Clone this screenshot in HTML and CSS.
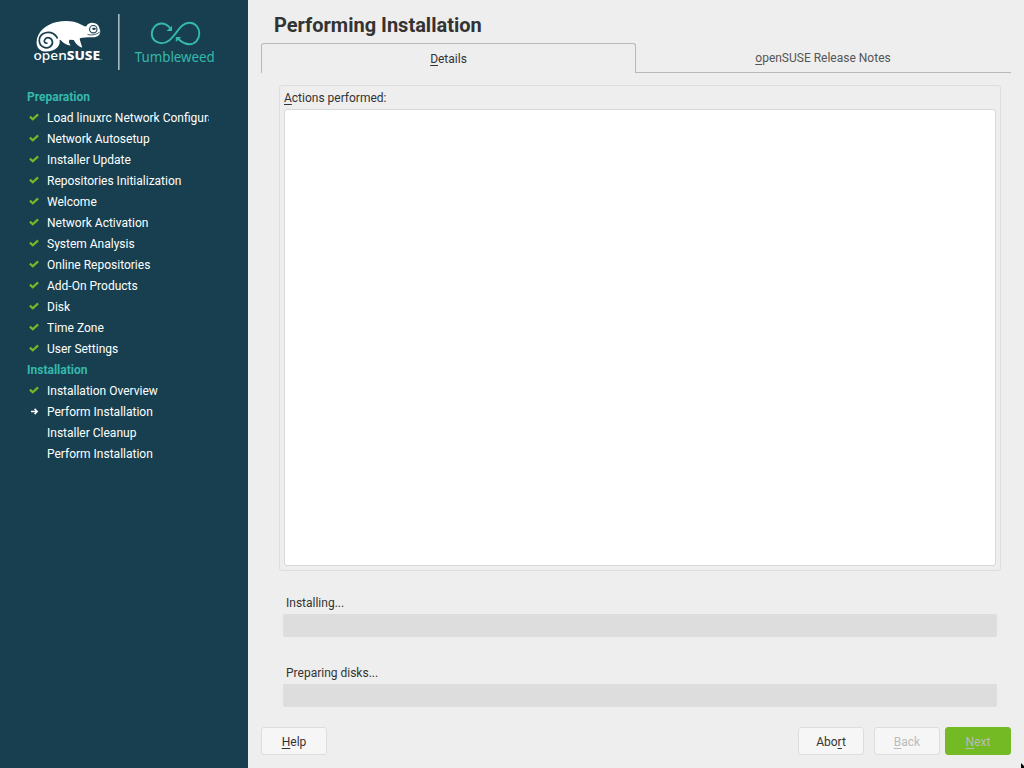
FILE: index.html
```html
<!DOCTYPE html>
<html lang="en">
<head>
<meta charset="utf-8">
<title>Performing Installation</title>
<link rel="stylesheet" href="styles.css">
</head>
<body>
<svg class="defs" width="0" height="0">
  <symbol id="check" viewBox="0 0 11 9"><path d="M.9 3.6 3.8 6.2 9.1 1.4" fill="none" stroke="#73ba25" stroke-width="2.2"/></symbol>
  <symbol id="arrow" viewBox="0 0 11 9"><path d="M2 4.5H8M5.6 1.9 8.2 4.5 5.6 7.1" fill="none" stroke="#fff" stroke-width="1.5"/></symbol>
</svg>
<div class="installer">
  <aside class="sidebar">
    <svg class="brand" width="248" height="87" viewBox="0 0 248 87">
      <path class="white" d="M46 51.6C40 51.6 36.6 48 36.6 42.3 36.6 32 46 24 57 21.9 66 20.1 75 21.2 81 24.4L85 26.6 86.3 26.2C87.3 24.1 90 22.5 93.5 22.9 97 23.3 99 25.5 99.3 28L100.3 31.2C100.2 35 97.5 37.3 93 37.2 88.5 37.2 84 37.1 79.7 38.2 79.8 40.8 81.2 43.5 82.2 47.5 78.8 47 75.3 43.3 73.8 40L69.5 39.7C68.3 41.5 69.3 43.2 70.7 45.5 66.5 45.2 63 42.8 61.2 40.5L59.5 39.8C61 46 55.2 51.6 46 51.6Z"/>
      <path class="spiral" d="M57.5 38.5C54.5 32 47.7 31 43 33.8 37.8 37.2 38.3 44.6 43.2 47 47.8 49.2 53 46.3 52.4 41.7 51.8 37.6 47 36.4 44.9 39.4 43.5 41.5 44.7 43.6 47.5 43.2"/>
      <circle class="eye" cx="93.3" cy="29.2" r="3.7"/>
      <ellipse class="pupil" cx="94" cy="28.8" rx="1.9" ry="1.1"/>
      <path class="mouth" d="M87.5 34.6C92 35.6 96.5 34.6 99.8 32"/>
      <text class="wordmark" x="33.5" y="60.3" textLength="66.5" lengthAdjust="spacingAndGlyphs">open<tspan class="strong">SUSE</tspan></text>
      <rect class="white dot" x="100.5" y="59" width="1" height="1"/>
      <rect class="divider" x="118" y="14" width="1.6" height="56"/>
      <path class="loop" d="M170 28C167.4 24.8 164.5 23.5 161.5 23.5 156 23.5 151.8 28.2 151.8 33.7S156 43.2 161.5 43.2C168 43.2 172 38 175.5 33.6 179 29 182.6 22.8 189.5 22.8 195.2 22.8 199.3 27.7 199.3 33.5S195 44.2 189.5 44.2C185 44.2 181.7 42.3 178.4 39"/>
      <path class="head" d="M172 25.8V31H166.4ZM175.8 42V36.9H181.3Z"/>
      <text class="flavor" x="134.8" y="61.5" textLength="80" lengthAdjust="spacingAndGlyphs">Tumbleweed</text>
    </svg>
    <nav class="steps">
      <h2>Preparation</h2>
      <ul>
        <li><svg><use href="#check"/></svg><span>Load linuxrc Network Configuration</span></li>
        <li><svg><use href="#check"/></svg><span>Network Autosetup</span></li>
        <li><svg><use href="#check"/></svg><span>Installer Update</span></li>
        <li><svg><use href="#check"/></svg><span>Repositories Initialization</span></li>
        <li><svg><use href="#check"/></svg><span>Welcome</span></li>
        <li><svg><use href="#check"/></svg><span>Network Activation</span></li>
        <li><svg><use href="#check"/></svg><span>System Analysis</span></li>
        <li><svg><use href="#check"/></svg><span>Online Repositories</span></li>
        <li><svg><use href="#check"/></svg><span>Add-On Products</span></li>
        <li><svg><use href="#check"/></svg><span>Disk</span></li>
        <li><svg><use href="#check"/></svg><span>Time Zone</span></li>
        <li><svg><use href="#check"/></svg><span>User Settings</span></li>
      </ul>
      <h2>Installation</h2>
      <ul>
        <li><svg><use href="#check"/></svg><span>Installation Overview</span></li>
        <li><svg><use href="#arrow"/></svg><span>Perform Installation</span></li>
        <li><svg></svg><span>Installer Cleanup</span></li>
        <li><svg></svg><span>Perform Installation</span></li>
      </ul>
    </nav>
  </aside>
  <main class="content">
    <h1>Performing Installation</h1>
    <div class="tabs">
      <div class="tab active"><span><u>D</u>etails</span></div>
      <div class="tab"><span><u>o</u>penSUSE Release Notes</span></div>
    </div>
    <section class="panel">
      <div class="group">
        <label><u>A</u>ctions performed:</label>
        <div class="log"></div>
      </div>
      <div class="progress first"><span>Installing...</span><div class="bar"></div></div>
      <div class="progress"><span>Preparing disks...</span><div class="bar"></div></div>
    </section>
    <footer class="actions">
      <button class="btn help"><span><u>H</u>elp</span></button>
      <button class="btn"><span>Abo<u>r</u>t</span></button>
      <button class="btn back" disabled><span><u>B</u>ack</span></button>
      <button class="btn next" disabled><span><u>N</u>ext</span></button>
    </footer>
  </main>
  <svg class="cursor" width="4" height="5" viewBox="0 0 4 5"><path d="M1 0V5H4V3Z" fill="#000"/></svg>
</div>
</body>
</html>
```
FILE: styles.css
```css
* { box-sizing: border-box; }
body { margin: 0; font: 12px/21px Roboto, sans-serif; color: #333; background: #eee; }
.defs { position: absolute; }
.installer { position: relative; display: flex; width: 1024px; height: 768px; overflow: hidden; }
.sidebar { width: 248px; flex: none; background: #173f4f; color: #fff; }
.brand { display: block; }
.white { fill: #fff; }
.spiral { fill: none; stroke: #173f4f; stroke-width: 1.7; }
.eye { fill: #fff; stroke: #173f4f; stroke-width: 1.1; }
.pupil { fill: #173f4f; }
.mouth { fill: none; stroke: #173f4f; stroke-width: .8; }
.wordmark { fill: #fff; font: 500 12.5px "Noto Sans", sans-serif; }
.strong { font-weight: 800; }
.dot { opacity: .6; }
.divider { fill: #a9b8be; }
.loop { fill: none; stroke: #35b9ab; stroke-width: 1.9; }
.head, .flavor { fill: #35b9ab; }
.flavor { font: 14.5px "Noto Sans", sans-serif; }
.steps { padding-left: 27px; }
.steps h2 { margin: 0; font: 700 12px/21px Roboto, sans-serif; color: #35b9ab; height: 21px; }
.steps ul { list-style: none; margin: 0; padding: 0; }
.steps li { display: flex; height: 21px; }
.steps svg { width: 11px; height: 9px; margin: 5px 7px 0 2px; flex: none; }
.steps span { width: 161.5px; overflow: hidden; white-space: nowrap; }
.content { flex: 1; display: flex; flex-direction: column; padding: 0 13px; }
h1 { margin: 0; padding: 9px 0 0 13px; height: 43px; font: 700 20px/32px Roboto, sans-serif; }
u { text-decoration: underline 1px; text-underline-offset: 2px; text-decoration-skip-ink: none; }
.tabs { display: flex; height: 30px; }
.tab { flex: 1; padding: 5px 1px 0 0; text-align: center; border-bottom: 1px solid #b8b8b8; color: #555; }
.tab.active { flex: 0 0 375px; padding: 5px 0 0; border: 1px solid #b8b8b8; border-bottom: 0; border-radius: 3px 3px 0 0; color: #333; }
.panel { padding: 12px 10px 0 18px; height: 654px; }
.group { height: 486px; padding: 2px 4px 4px; border: 1px solid #ddd; border-radius: 3px; display: flex; flex-direction: column; }
.log { flex: 1; border: 1px solid #d8d8d8; border-radius: 3px; background: #fff; }
.progress { margin: 0 4px; padding-top: 26px; }
.progress.first { padding-top: 22px; }
.progress span { display: block; padding-left: 3px; height: 21px; }
.bar { height: 23px; border-radius: 2px; background: #ddd; }
.actions { display: flex; height: 41px; }
.btn { width: 66px; height: 28px; padding: 2px 0 0; border: 1px solid #ddd; border-radius: 3px; background: #f6f6f6; color: #333; font: 12px/21px Roboto, sans-serif; }
.help { margin-right: auto; }
.back { margin: 0 5px 0 10px; color: #bbb; }
.next { background: #73ba25; border-color: #73ba25; color: #bbb; }
.cursor { position: absolute; right: 0; bottom: 0; }
```
